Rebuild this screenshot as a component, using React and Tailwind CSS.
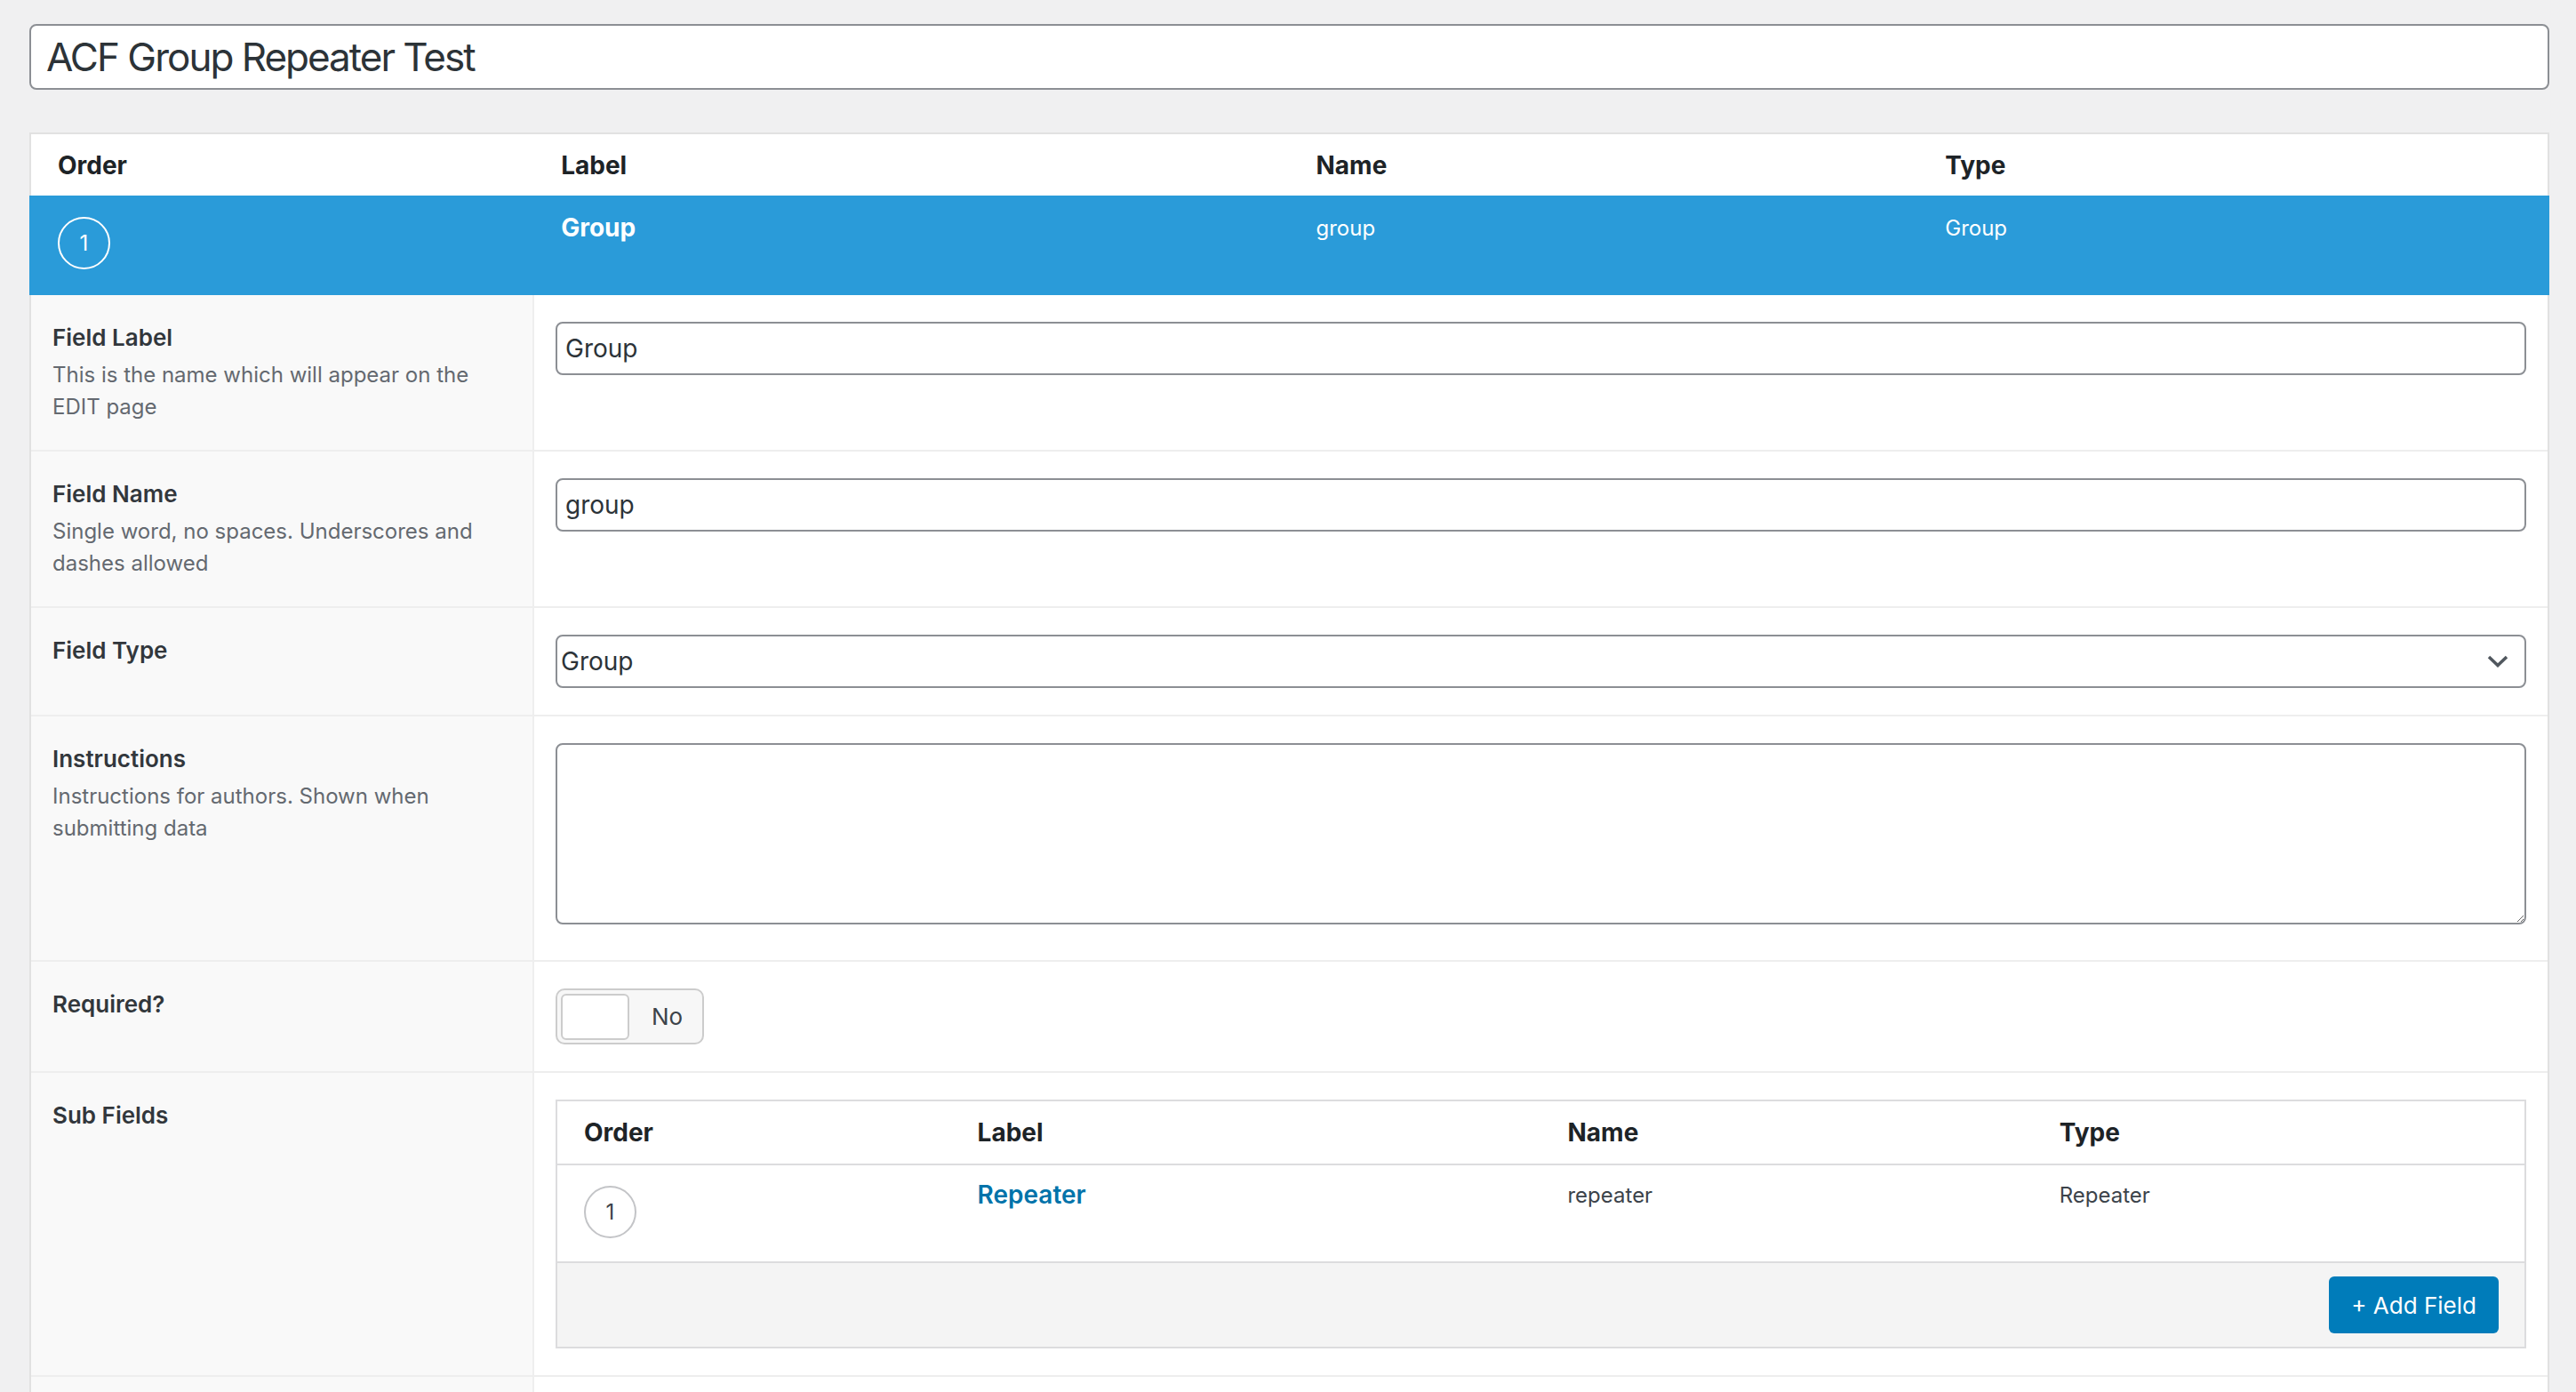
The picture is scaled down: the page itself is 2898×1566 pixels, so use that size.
import React from "react";

function Circle({ light }) {
  return (
    <div
      className={
        light
          ? "w-[59px] h-[59px] rounded-full border-2 border-white text-white flex items-center justify-center text-[24px] leading-none"
          : "w-[59px] h-[59px] rounded-full border-2 border-[#c3c4c7] text-[#3c434a] flex items-center justify-center text-[24px] leading-none"
      }
    >
      1
    </div>
  );
}

function LabelCell({ title, desc }) {
  return (
    <div className="w-[566px] shrink-0 bg-[#f9f9f9] border-r-2 border-[#eeeeee] px-[24px] py-[30px]">
      {title && (
        <div className="text-[26px] leading-[36px] font-semibold text-[#32373c] mb-[6px]">{title}</div>
      )}
      {desc && (
        <div className="text-[24px] leading-[36px] text-[#646970] pr-[10px]">{desc}</div>
      )}
    </div>
  );
}

function Row({ first, children, title, desc }) {
  return (
    <div className={first ? "flex" : "flex border-t-2 border-[#eeeeee]"}>
      <LabelCell title={title} desc={desc} />
      <div className="flex-1 min-w-0 px-[24px] py-[30px] bg-white">{children}</div>
    </div>
  );
}

function TextBox({ value }) {
  return (
    <div className="h-[60px] border-2 border-[#8c8f94] rounded-[8px] bg-white flex items-center pl-[9px] text-[28px] text-[#2c3338]">
      {value}
    </div>
  );
}

export default function App() {
  return (
    <div className="min-h-screen bg-[#f0f0f1] pl-[33px] pr-[30px] pt-[27px] font-[family-name:Inter,'Liberation_Sans',sans-serif]">
      <div className="h-[74px] bg-white border-2 border-[#8c8f94] rounded-[8px] flex items-center pl-[17px] text-[44px] tracking-[-2px] text-[#2c3338]">
        ACF Group Repeater Test
      </div>

      <div className="mt-[48px]">
        {/* header */}
        <div className="flex bg-white border-x-2 border-t-2 border-[#e1e1e1] pt-[17px] pb-[16px] text-[28px] leading-[36px] font-bold text-[#1d2327]">
          <div className="w-[20%] pl-[30px]">Order</div>
          <div className="w-[30%] pl-[30px]">Label</div>
          <div className="w-[25%] pl-[30px]">Name</div>
          <div className="w-[25%] pl-[30px]">Type</div>
        </div>

        {/* open field row */}
        <div className="flex h-[112px] bg-[#2a9bd9] px-[2px] text-white">
          <div className="w-[20%] pl-[30px] pt-[24px]">
            <Circle light />
          </div>
          <div className="w-[30%] pl-[30px] pt-[18px] text-[28px] leading-[36px] font-bold">Group</div>
          <div className="w-[25%] pl-[30px] pt-[19px] text-[24px] leading-[36px]">group</div>
          <div className="w-[25%] pl-[30px] pt-[19px] text-[24px] leading-[36px]">Group</div>
        </div>

        {/* settings */}
        <div className="border-x-2 border-[#e1e1e1] bg-white">
          <Row first title="Field Label" desc="This is the name which will appear on the EDIT page">
            <TextBox value="Group" />
          </Row>
          <Row title="Field Name" desc="Single word, no spaces. Underscores and dashes allowed">
            <TextBox value="group" />
          </Row>
          <Row title="Field Type">
            <div className="h-[60px] border-2 border-[#8c8f94] rounded-[8px] bg-white flex items-center justify-between pl-[4px] pr-[18px] text-[28px] text-[#2c3338]">
              <span>Group</span>
              <svg width="24" height="14" viewBox="0 0 24 14" fill="none">
                <path d="M2 2 L12 11.5 L22 2" stroke="#50575e" strokeWidth="3.5" />
              </svg>
            </div>
          </Row>
          <Row title="Instructions" desc="Instructions for authors. Shown when submitting data">
            <textarea
              readOnly
              className="block w-full h-[204px] mb-[10px] border-2 border-[#8c8f94] rounded-[8px] bg-white resize-y outline-none"
            />
          </Row>
          <Row title="Required?">
            <div className="w-[167px] h-[63px] rounded-[10px] border-2 border-[#cccccc] bg-[#f7f7f7] flex items-center pl-[4px]">
              <div className="w-[77px] h-[52px] rounded-[6px] border-2 border-[#cccccc] bg-white" />
              <span className="ml-[25px] text-[26px] text-[#3c434a]">No</span>
            </div>
          </Row>
          <Row title="Sub Fields">
            <div className="border-2 border-[#dcdcde] bg-white">
              <div className="flex border-b-2 border-[#dcdcde] pt-[17px] pb-[17px] text-[28px] leading-[36px] font-bold text-[#1d2327]">
                <div className="w-[20%] pl-[30px]">Order</div>
                <div className="w-[30%] pl-[30px]">Label</div>
                <div className="w-[25%] pl-[30px]">Name</div>
                <div className="w-[25%] pl-[30px]">Type</div>
              </div>
              <div className="flex h-[108px] text-[#3c434a]">
                <div className="w-[20%] pl-[30px] pt-[23px]">
                  <Circle />
                </div>
                <div className="w-[30%] pl-[30px] pt-[15px] text-[28px] leading-[36px] font-semibold text-[#0073aa]">Repeater</div>
                <div className="w-[25%] pl-[30px] pt-[16px] text-[24px] leading-[36px]">repeater</div>
                <div className="w-[25%] pl-[30px] pt-[16px] text-[24px] leading-[36px]">Repeater</div>
              </div>
              <div className="flex justify-end bg-[#f4f4f4] border-t-2 border-[#dcdcde] py-[15px] pr-[29px]">
                <div className="h-[64px] px-[25px] rounded-[6px] bg-[#007cba] text-white text-[26px] flex items-center">
                  + Add Field
                </div>
              </div>
            </div>
          </Row>
          <div className="flex border-t-2 border-[#eeeeee] h-[120px]">
            <div className="w-[566px] shrink-0 bg-[#f9f9f9] border-r-2 border-[#eeeeee]" />
            <div className="flex-1 bg-white" />
          </div>
        </div>
      </div>
    </div>
  );
}
